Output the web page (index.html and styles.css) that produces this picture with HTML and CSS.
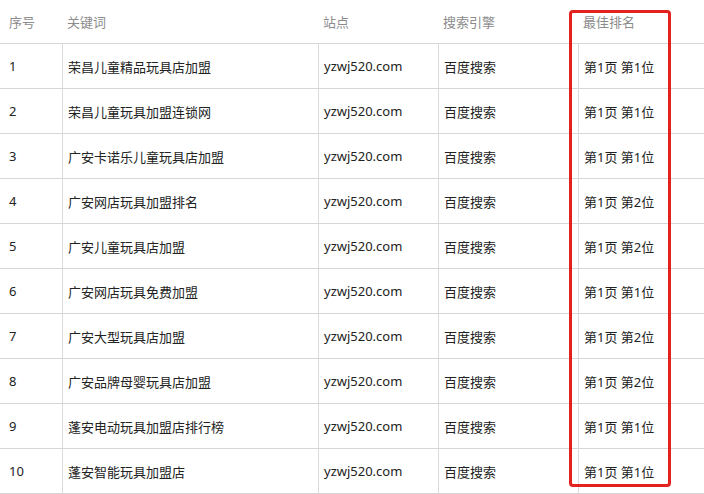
FILE: index.html
```html
<!DOCTYPE html>
<html lang="zh-CN">
<head>
<meta charset="utf-8">
<title>排名</title>
<link rel="stylesheet" href="styles.css">
</head>
<body>
<div class="wrap">
  <table class="rank">
    <colgroup>
      <col class="c-no"><col class="c-kw"><col class="c-site"><col class="c-eng"><col class="c-best">
    </colgroup>
    <thead>
      <tr><th>序号</th><th>关键词</th><th>站点</th><th>搜索引擎</th><th>最佳排名</th></tr>
    </thead>
    <tbody>
      <tr><td>1</td><td>荣昌儿童精品玩具店加盟</td><td>yzwj520.com</td><td>百度搜索</td><td>第1页 第1位</td></tr>
      <tr><td>2</td><td>荣昌儿童玩具加盟连锁网</td><td>yzwj520.com</td><td>百度搜索</td><td>第1页 第1位</td></tr>
      <tr><td>3</td><td>广安卡诺乐儿童玩具店加盟</td><td>yzwj520.com</td><td>百度搜索</td><td>第1页 第1位</td></tr>
      <tr><td>4</td><td>广安网店玩具加盟排名</td><td>yzwj520.com</td><td>百度搜索</td><td>第1页 第2位</td></tr>
      <tr><td>5</td><td>广安儿童玩具店加盟</td><td>yzwj520.com</td><td>百度搜索</td><td>第1页 第2位</td></tr>
      <tr><td>6</td><td>广安网店玩具免费加盟</td><td>yzwj520.com</td><td>百度搜索</td><td>第1页 第1位</td></tr>
      <tr><td>7</td><td>广安大型玩具店加盟</td><td>yzwj520.com</td><td>百度搜索</td><td>第1页 第2位</td></tr>
      <tr><td>8</td><td>广安品牌母婴玩具店加盟</td><td>yzwj520.com</td><td>百度搜索</td><td>第1页 第2位</td></tr>
      <tr><td>9</td><td>蓬安电动玩具加盟店排行榜</td><td>yzwj520.com</td><td>百度搜索</td><td>第1页 第1位</td></tr>
      <tr><td>10</td><td>蓬安智能玩具加盟店</td><td>yzwj520.com</td><td>百度搜索</td><td>第1页 第1位</td></tr>
    </tbody>
  </table>
  <div class="highlight"></div>
</div>
</body>
</html>
```

FILE: styles.css
```css
html, body {
  margin: 0;
  padding: 0;
  background: #fff;
}
.wrap {
  position: relative;
  width: 704px;
  height: 494px;
  overflow: hidden;
}
.rank {
  width: 704px;
  border-collapse: separate;
  border-spacing: 0;
  table-layout: fixed;
  font-family: "Noto Sans", "Noto Sans CJK SC", sans-serif;
  font-size: 13px;
  color: #222;
}
.c-no { width: 62px; }
.c-kw { width: 256px; }
.c-site { width: 120px; }
.c-eng { width: 140px; }
.c-best { width: 126px; }
.rank th {
  height: 43px;
  padding: 0 0 0 5px;
  text-align: left;
  font-weight: normal;
  color: #8c8c8c;
  border-bottom: 1px solid #d6d6d6;
  vertical-align: middle;
}
.rank th:first-child { padding-left: 9px; }
.rank td {
  height: 44px;
  padding: 0 0 0 5px;
  border-bottom: 1px solid #d6d6d6;
  border-left: 1px solid #dadada;
  vertical-align: middle;
  white-space: nowrap;
}
.rank td:first-child {
  border-left: none;
  padding-left: 9px;
}
.highlight {
  position: absolute;
  left: 569px;
  top: 10px;
  width: 96px;
  height: 471px;
  border: 3px solid #e3221e;
  border-radius: 4px;
}
```
